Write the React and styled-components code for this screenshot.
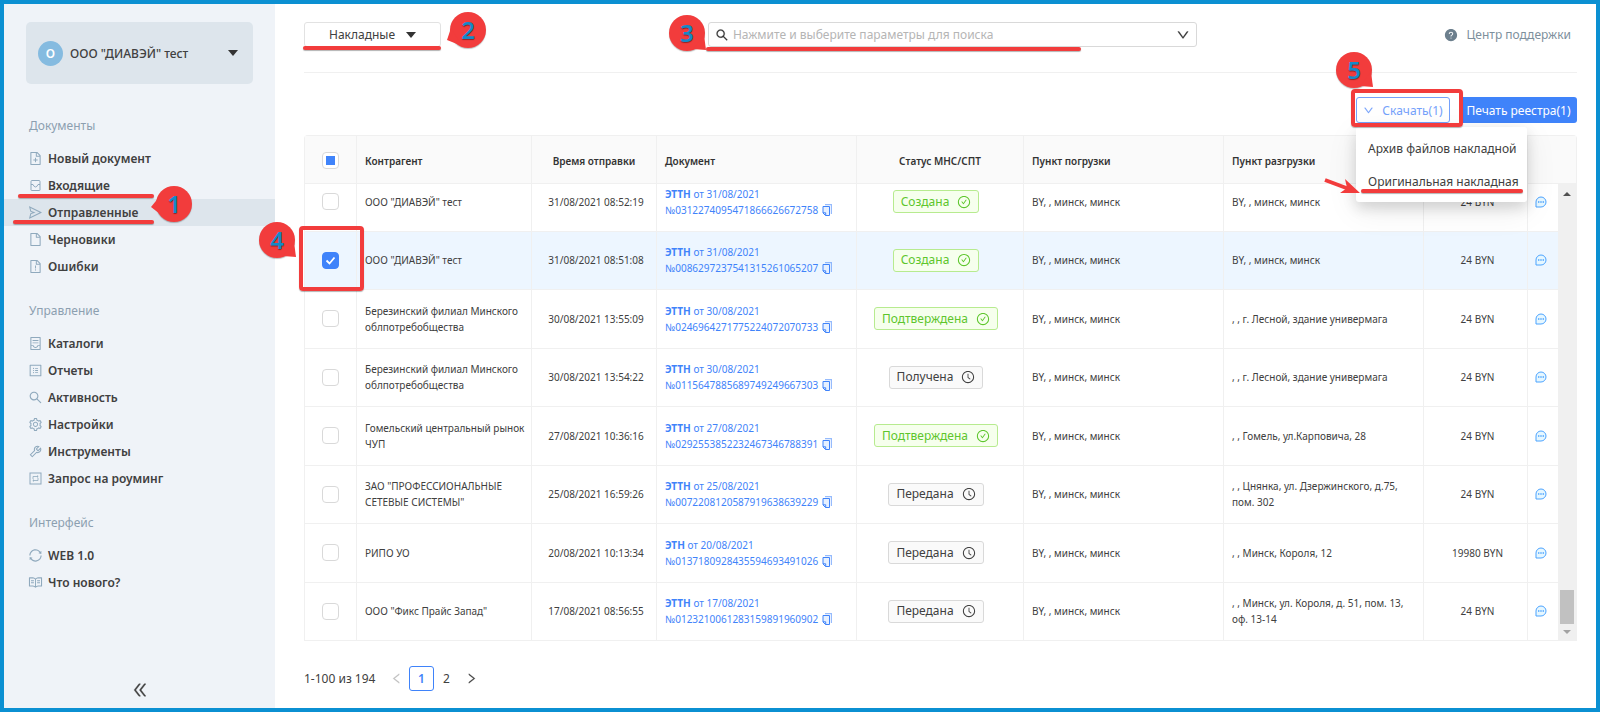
import React from 'react';
import styled, { createGlobalStyle, css } from 'styled-components';
import {
  AiOutlineFileAdd, AiOutlineSend, AiOutlineFile, AiOutlineFileExclamation, AiOutlineContainer,
  AiOutlineProfile, AiOutlineSearch, AiOutlineSetting, AiOutlineTool, AiOutlineSync, AiOutlineRead,
  AiOutlineCheckCircle, AiOutlineClockCircle, AiFillQuestionCircle,
  AiOutlineDoubleLeft, AiOutlineDown, AiOutlineLeft, AiOutlineRight,
} from 'react-icons/ai';

const GlobalStyle = createGlobalStyle`
  * { box-sizing: border-box; }
  body {
    margin: 0;
    font-family: "Noto Sans", "Open Sans", sans-serif;
    font-size: 12px;
    color: #404040;
    background: #fff;
  }
  button, input { font: inherit; color: inherit; }
  button { cursor: pointer; }
  a { color: inherit; text-decoration: none; }
`;

const RED = '#f23c3c';

const Page = styled.div`
  display: flex;
  min-height: 100vh;
  border: 4px solid #0b90d2;
`;

/* ---------- sidebar ---------- */

const Sidebar = styled.aside`
  display: flex;
  flex-direction: column;
  flex: 0 0 271px;
  background: #eff3f8;
`;

const Account = styled.button`
  display: flex;
  align-items: center;
  height: 62px;
  margin: 18px 22px 32px;
  padding: 0 15px 0 12px;
  border: 0;
  border-radius: 5px;
  background: #dde5ec;
  font-weight: 500;
`;

const Avatar = styled.span`
  display: grid;
  place-items: center;
  width: 25px;
  height: 25px;
  margin-right: 7px;
  border-radius: 50%;
  background: #85bbe0;
  color: #fff;
  font-weight: 600;
`;

const AccountName = styled.span`
  flex: 1;
  text-align: left;
`;

const Triangle = styled.span`
  border: 5px solid transparent;
  border-top: 6px solid #333;
  border-bottom: 0;
`;

const GroupTitle = styled.h2`
  margin: 0;
  padding: 0 25px;
  line-height: 20px;
  font-size: 12px;
  font-weight: 400;
  color: #8c9fb0;
`;

const Menu = styled.ul`
  list-style: none;
  margin: 9px 0 21px;
  padding: 0;
`;

const MenuItem = styled.li`
  position: relative;
`;

const MenuLink = styled.a`
  display: flex;
  align-items: center;
  gap: 5px;
  height: 27px;
  padding: 0 24px;
  font-weight: 600;
  background: ${({ $active }) => ($active ? '#dde5ec' : 'transparent')};

  svg {
    width: 15px;
    height: 15px;
    color: #8fa9bd;
  }
`;

const Collapse = styled.button`
  margin: auto auto 9px;
  padding: 0;
  border: 0;
  background: none;
  line-height: 0;

  svg {
    width: 18px;
    height: 18px;
    stroke: currentColor;
    stroke-width: 20;
  }
`;

/* ---------- main area ---------- */

const Main = styled.main`
  flex: 1;
  min-width: 0;
  padding: 18px 19px 14px 29px;
`;

const TopBar = styled.header`
  display: grid;
  grid-template-columns: 17fr 489px 16fr;
  align-items: start;
  height: 51px;
  border-bottom: 1px solid #f0f0f0;
`;

const TypeWrap = styled.div`
  position: relative;
  width: 137px;
`;

const TypeButton = styled.button`
  display: flex;
  align-items: center;
  justify-content: center;
  gap: 11px;
  width: 100%;
  height: 25px;
  border: 1px solid #e2e2e2;
  border-radius: 3px;
  background: #fff;
`;

const SearchBox = styled.label`
  position: relative;
  display: flex;
  align-items: center;
  gap: 4px;
  height: 25px;
  padding: 0 6px;
  border: 1px solid #d9d9d9;
  border-radius: 3px;

  svg {
    width: 14px;
    height: 14px;
    color: #333;
    stroke: currentColor;
    stroke-width: 20;
  }
`;

const SearchInput = styled.input`
  flex: 1;
  min-width: 0;
  padding: 0;
  border: 0;
  outline: 0;
  background: none;

  &::placeholder { color: #b5b5b5; }
`;

const Support = styled.a`
  display: flex;
  align-items: center;
  justify-self: end;
  gap: 8px;
  height: 25px;
  padding-right: 6px;
  color: #7d8f9c;

  svg {
    width: 14px;
    height: 14px;
    color: #6c7f8d;
  }
`;

const Actions = styled.div`
  display: flex;
  justify-content: flex-end;
  gap: 10px;
  padding: 24px 0 12px;
`;

const DownloadWrap = styled.div`
  position: relative;
`;

const actionButton = css`
  height: 26px;
  border-radius: 3px;
  white-space: nowrap;
`;

const DownloadButton = styled.button`
  ${actionButton}
  display: flex;
  align-items: center;
  justify-content: center;
  gap: 8px;
  width: 94px;
  padding: 0;
  border: 1px solid #74a1fb;
  background: #fff;
  color: #74a1fb;

  svg {
    width: 11px;
    height: 11px;
    stroke: currentColor;
    stroke-width: 20;
  }
`;

const PrintButton = styled.button`
  ${actionButton}
  width: 117px;
  padding: 0;
  border: 0;
  background: #3f83fa;
  color: #fff;
`;

const Dropdown = styled.ul`
  position: absolute;
  z-index: 3;
  top: 30px;
  left: 0;
  width: 171px;
  margin: 0;
  padding: 5px 0 4px;
  list-style: none;
  border-radius: 3px;
  background: #fff;
  box-shadow: 0 6px 14px rgba(0, 0, 0, 0.14), 0 8px 32px rgba(0, 0, 0, 0.08);
`;

const DropdownItem = styled.li`
  line-height: 33px;
  padding: 0 12px;
  white-space: nowrap;
`;

/* ---------- table ---------- */

const TableFrame = styled.div`
  position: relative;
  border: 1px solid #f0f0f0;
  border-bottom: 0;
  border-radius: 4px 4px 0 0;
`;

const Table = styled.table`
  width: 100%;
  border-collapse: separate;
  border-spacing: 0;
  table-layout: fixed;
  font-size: 10px;
  line-height: 16px;
`;

const HeadTable = styled(Table)`
  background: #fafafa;
`;

const BodyTable = styled(Table)`
  flex: 0 0 468px;
`;

const Th = styled.th`
  height: 48px;
  padding: 2px 8px 0;
  border-right: ${({ $last }) => ($last ? '0' : '1px solid #f0f0f0')};
  border-bottom: 1px solid #f0f0f0;
  text-align: ${({ $center }) => ($center ? 'center' : 'left')};
  font-weight: 600;
  color: #333;
`;

const Scroll = styled.div`
  display: flex;
  height: 457px;
`;

/* scrolled to the end, so the first row is cut by the header */
const Rows = styled.div`
  display: flex;
  flex-direction: column;
  justify-content: flex-end;
  flex: 1;
  min-width: 0;
  overflow: hidden;
`;

const Row = styled.tr`
  background: ${({ $selected }) => ($selected ? '#edf6ff' : '#fff')};
`;

const Td = styled.td`
  height: 58px;
  padding: 0 4px 0 8px;
  border-right: 1px solid #f0f0f0;
  border-bottom: 1px solid #f0f0f0;
  text-align: ${({ $center }) => ($center ? 'center' : 'left')};
`;

const CheckCell = styled(Td)`
  padding: 0 8px;
`;

const IconCell = styled(Td)`
  padding: 0 4px 0 0;
  border-right: 0;
  text-align: center;
  line-height: 0;
`;

const Checkbox = styled.input`
  appearance: none;
  display: block;
  width: 17px;
  height: 17px;
  margin: 0 auto;
  border: 1px solid #d9d9d9;
  border-radius: 4px;
  background: #fff center / 100% no-repeat;

  ${({ $partial }) => $partial && css`
    background-image: linear-gradient(#3f83fa, #3f83fa);
    background-size: 9px 9px;
  `}

  &:checked {
    border-color: #3f83fa;
    background-color: #3f83fa;
    background-image: url("data:image/svg+xml,%3Csvg xmlns='http://www.w3.org/2000/svg' viewBox='0 0 15 15'%3E%3Cpath d='M3.5 7.5l3 3 5-6' fill='none' stroke='white' stroke-width='1.8'/%3E%3C/svg%3E");
  }
`;

const DocLink = styled.a`
  color: #3f83fa;
`;

const DocNumber = styled.span`
  display: flex;
  align-items: center;
  gap: 4px;
`;

const Status = styled.span`
  display: inline-flex;
  align-items: center;
  gap: 8px;
  height: 23px;
  margin-right: 12px;
  padding: 0 7px;
  border: 1px solid ${({ $ok }) => ($ok ? '#b7eb8f' : '#d9d9d9')};
  border-radius: 3px;
  background: ${({ $ok }) => ($ok ? '#f6ffed' : '#fafafa')};
  color: ${({ $ok }) => ($ok ? '#5dc62c' : '#404040')};
  font-size: 12px;
  vertical-align: middle;

  svg {
    width: 14px;
    height: 14px;
  }
`;

const ScrollBar = styled.div`
  display: flex;
  flex-direction: column;
  align-items: center;
  justify-content: space-between;
  flex: 0 0 18px;
  padding: 8px 0 7px;
  background: #f0f0f0;
`;

const Arrow = styled.span`
  border: 4px solid transparent;
  ${({ $up }) => ($up
    ? 'border-bottom-color: #505050; border-top: 0;'
    : 'border-top-color: #a3a3a3; border-bottom: 0;')}
`;

const Thumb = styled.span`
  width: 14px;
  height: 34px;
  margin: auto 0 6px;
  background: #c1c1c1;
`;

const Pager = styled.nav`
  display: flex;
  align-items: center;
  height: 25px;
  margin-top: 25px;
`;

const PagerTotal = styled.span`
  width: 80px;
`;

const PageButton = styled.button`
  display: grid;
  place-items: center;
  width: 25px;
  height: 25px;
  padding: 0;
  border: 1px solid ${({ $current }) => ($current ? '#3f83fa' : 'transparent')};
  border-radius: 3px;
  background: none;
  color: ${({ $current }) => ($current ? '#3f83fa' : '#404040')};
  font-weight: ${({ $current }) => ($current ? 600 : 400)};

  &:disabled { color: #bfbfbf; }

  svg {
    width: 13px;
    height: 13px;
    stroke: currentColor;
    stroke-width: 20;
  }
`;

/* ---------- red tutorial marks, they lie over the interface ---------- */

const Underline = styled.span`
  position: absolute;
  z-index: 4;
  left: ${({ $left }) => $left}px;
  bottom: ${({ $bottom }) => $bottom}px;
  width: ${({ $width }) => $width}px;
  height: 4px;
  border-radius: 2px;
  background: ${RED};
  box-shadow: 0 1px 1px rgba(0, 0, 0, 0.3);
`;

const Frame = styled.span`
  position: absolute;
  z-index: 5;
  inset: ${({ $inset }) => $inset};
  min-width: 65px;
  min-height: 38px;
  border: 4px solid ${RED};
  border-radius: 4px;
  box-shadow: 0 1px 1px rgba(0, 0, 0, 0.3);
  pointer-events: none;
`;

const SquareFrame = styled(Frame)`
  width: 65px;
  height: 65px;
`;

const Bubble = styled.span`
  position: absolute;
  z-index: 6;
  left: ${({ $left }) => $left}px;
  top: ${({ $top }) => $top}px;
  display: grid;
  place-items: center;
  width: 36px;
  height: 36px;
  border-radius: 50%;
  background: ${RED};
  box-shadow: 0 1px 1px rgba(0, 0, 0, 0.25);
  color: #1489c8;
  font-size: 24px;
  font-weight: 600;
  line-height: 36px;
  text-shadow: 0 1px 1px rgba(0, 0, 0, 0.4);

  b {
    position: relative;
    font-weight: inherit;
  }
`;

const Tail = styled.svg`
  && {
    position: absolute;
    inset: 0;
    width: 36px;
    height: 36px;
    overflow: visible;
    stroke: none;
  }
`;

const RedArrow = styled.svg`
  position: absolute;
  z-index: 5;
  left: -33px;
  top: 49px;
`;

const tails = {
  left: '4,10 -5,21 4,28',
  leftLow: '1,16 -3,28 12,34',
  rightLow: '35,20 37,35 24,34',
};

const Callout = ({ number, left, top, tail }) => (
  <Bubble $left={left} $top={top}>
    <Tail><polygon points={tails[tail]} fill={RED} /></Tail>
    <b>{number}</b>
  </Bubble>
);

/* ---------- icons ---------- */

const InboxIcon = () => (
  <svg viewBox="0 0 15 15" fill="none" stroke="currentColor">
    <path d="M4 2.500h7q1 0 1 1V12q0 .5-.5.5h-8Q3 12.500 3 12V3.500q0-1 1-1zM3 6.500h2q1 2.500 2.500 2.500T10 6.500h2" />
  </svg>
);

const RoamingIcon = () => (
  <svg viewBox="0 0 15 15" fill="none" stroke="currentColor">
    <rect x="2" y="2" width="11" height="11" />
    <path d="M5 8V5.500h5M9 4.500l1.200 1L9 6.500M10 7v2.500H5M6 8.500L4.800 9.500 6 10.500" strokeWidth="0.800" />
  </svg>
);

const CopyIcon = () => (
  <svg width="10" height="12" viewBox="0 0 10 12" fill="none" stroke="currentColor">
    <path d="M3 .5h6.500V10" opacity="0.550" strokeWidth="1.400" />
    <path d="M1 2.500h6.500v9H3.500L1 9zM1 8.800h2.700v2.700" fill="#e6f0ff" />
  </svg>
);

const MessageIcon = () => (
  <svg width="12" height="12" viewBox="0 0 12 12" fill="none" stroke="#4ba3ff">
    <path d="M6 1a5 5 0 1 1 0 10H1V6a5 5 0 0 1 5-5z" fill="#e6f7ff" />
    <path d="M3 6h1.400M5.300 6h1.400M7.600 6H9" strokeWidth="1.300" />
  </svg>
);

const groups = [
  {
    title: 'Документы',
    items: [
      { name: 'Новый документ', icon: AiOutlineFileAdd },
      { name: 'Входящие', icon: InboxIcon },
      { name: 'Отправленные', icon: AiOutlineSend, active: true },
      { name: 'Черновики', icon: AiOutlineFile },
      { name: 'Ошибки', icon: AiOutlineFileExclamation },
    ],
  },
  {
    title: 'Управление',
    items: [
      { name: 'Каталоги', icon: AiOutlineContainer },
      { name: 'Отчеты', icon: AiOutlineProfile },
      { name: 'Активность', icon: AiOutlineSearch },
      { name: 'Настройки', icon: AiOutlineSetting },
      { name: 'Инструменты', icon: AiOutlineTool },
      { name: 'Запрос на роуминг', icon: RoamingIcon },
    ],
  },
  {
    title: 'Интерфейс',
    items: [
      { name: 'WEB 1.0', icon: AiOutlineSync },
      { name: 'Что нового?', icon: AiOutlineRead },
    ],
  },
];

const rows = [
  { partner: 'ООО "ДИАВЭЙ" тест', time: '31/08/2021 08:52:19', type: 'ЭТТН', date: '31/08/2021', number: '0312274095471866626672758', status: 'Создана', ok: true, to: 'BY, , минск, минск', sum: '24 BYN' },
  { partner: 'ООО "ДИАВЭЙ" тест', time: '31/08/2021 08:51:08', type: 'ЭТТН', date: '31/08/2021', number: '0086297237541315261065207', status: 'Создана', ok: true, to: 'BY, , минск, минск', sum: '24 BYN', selected: true },
  { partner: 'Березинский филиал Минского облпотребобщества', time: '30/08/2021 13:55:09', type: 'ЭТТН', date: '30/08/2021', number: '0246964271775224072070733', status: 'Подтверждена', ok: true, to: ', , г. Лесной, здание универмага', sum: '24 BYN' },
  { partner: 'Березинский филиал Минского облпотребобщества', time: '30/08/2021 13:54:22', type: 'ЭТТН', date: '30/08/2021', number: '0115647885689749249667303', status: 'Получена', to: ', , г. Лесной, здание универмага', sum: '24 BYN' },
  { partner: 'Гомельский центральный рынок ЧУП', time: '27/08/2021 10:36:16', type: 'ЭТТН', date: '27/08/2021', number: '0292553852232467346788391', status: 'Подтверждена', ok: true, to: ', , Гомель, ул.Карповича, 28', sum: '24 BYN' },
  { partner: 'ЗАО "ПРОФЕССИОНАЛЬНЫЕ СЕТЕВЫЕ СИСТЕМЫ"', time: '25/08/2021 16:59:26', type: 'ЭТТН', date: '25/08/2021', number: '0072208120587919638639229', status: 'Передана', to: ', , Цнянка, ул. Дзержинского, д.75, пом. 302', sum: '24 BYN' },
  { partner: 'РИПО УО', time: '20/08/2021 10:13:34', type: 'ЭТН', date: '20/08/2021', number: '0137180928435594693491026', status: 'Передана', to: ', , Минск, Короля, 12', sum: '19980 BYN' },
  { partner: 'ООО "Фикс Прайс Запад"', time: '17/08/2021 08:56:55', type: 'ЭТТН', date: '17/08/2021', number: '0123210061283159891960902', status: 'Передана', to: ', , Минск, ул. Короля, д. 51, пом. 13, оф. 13-14', sum: '24 BYN' },
];

const Col = styled.col`
  width: ${({ $width }) => ($width ? `${$width}px` : 'auto')};
`;

const Columns = ({ last }) => (
  <colgroup>
    <Col $width={52} />
    <Col />
    <Col $width={125} />
    <Col $width={200} />
    <Col $width={167} />
    <Col $width={200} />
    <Col $width={200} />
    <Col $width={104} />
    <Col $width={last} />
  </colgroup>
);

const App = () => (
  <>
    <GlobalStyle />
    <Page>
      <Sidebar>
        <Account>
          <Avatar>О</Avatar>
          <AccountName>ООО "ДИАВЭЙ" тест</AccountName>
          <Triangle />
        </Account>
        {groups.map((group) => (
          <React.Fragment key={group.title}>
            <GroupTitle>{group.title}</GroupTitle>
            <Menu>
              {group.items.map(({ name, icon: Icon, active }) => (
                <MenuItem key={name}>
                  <MenuLink href="#" $active={active}><Icon />{name}</MenuLink>
                  {active && (
                    <>
                      <Underline $left={14} $bottom={28} $width={136} />
                      <Underline $left={9} $bottom={2} $width={141} />
                      <Callout number="1" left={152} top={-13} tail="left" />
                    </>
                  )}
                </MenuItem>
              ))}
            </Menu>
          </React.Fragment>
        ))}
        <Collapse aria-label="Свернуть меню"><AiOutlineDoubleLeft /></Collapse>
      </Sidebar>

      <Main>
        <TopBar>
          <TypeWrap>
            <TypeButton>Накладные <Triangle /></TypeButton>
            <Underline $left={-1} $bottom={-3} $width={138} />
            <Callout number="2" left={146} top={-10} tail="leftLow" />
          </TypeWrap>
          <SearchBox>
            <AiOutlineSearch />
            <SearchInput type="text" placeholder="Нажмите и выберите параметры для поиска" aria-label="Поиск" />
            <AiOutlineDown />
            <Underline $left={-3} $bottom={-5} $width={375} />
            <Callout number="3" left={-40} top={-8} tail="rightLow" />
          </SearchBox>
          <Support href="#"><AiFillQuestionCircle />Центр поддержки</Support>
        </TopBar>

        <Actions>
          <DownloadWrap>
            <DownloadButton><AiOutlineDown />Скачать(1)</DownloadButton>
            <Frame $inset="-8px -13px -4px -5px" />
            <Callout number="5" left={-20} top={-45} tail="rightLow" />
            <Dropdown>
              <DropdownItem>Архив файлов накладной</DropdownItem>
              <DropdownItem>Оригинальная накладная</DropdownItem>
              <Underline $left={5} $bottom={9} $width={162} />
              <RedArrow width="38" height="20" viewBox="0 0 38 20">
                <path d="M2 4l24 9" stroke={RED} strokeWidth="4" />
                <polygon points="22,3 37,17 17,17 24,12" fill={RED} />
              </RedArrow>
            </Dropdown>
          </DownloadWrap>
          <PrintButton>Печать реестра(1)</PrintButton>
        </Actions>

        <TableFrame>
          <HeadTable>
            <Columns last={48} />
            <thead>
              <tr>
                <Th><Checkbox type="checkbox" $partial aria-label="Выбрать все" /></Th>
                <Th>Контрагент</Th>
                <Th $center>Время отправки</Th>
                <Th>Документ</Th>
                <Th $center>Статус МНС/СПТ</Th>
                <Th>Пункт погрузки</Th>
                <Th>Пункт разгрузки</Th>
                <Th />
                <Th $last />
              </tr>
            </thead>
          </HeadTable>
          <Scroll>
            <Rows>
              <BodyTable>
                <Columns last={30} />
                <tbody>
                  {rows.map((row) => (
                    <Row key={row.number} $selected={row.selected}>
                      <CheckCell>
                        <Checkbox type="checkbox" defaultChecked={row.selected} aria-label={row.partner} />
                      </CheckCell>
                      <Td>{row.partner}</Td>
                      <Td $center>{row.time}</Td>
                      <Td>
                        <DocLink href="#">
                          <b>{row.type}</b> от {row.date}
                          <DocNumber>№{row.number} <CopyIcon /></DocNumber>
                        </DocLink>
                      </Td>
                      <Td $center>
                        <Status $ok={row.ok}>
                          {row.status}
                          {row.ok ? <AiOutlineCheckCircle /> : <AiOutlineClockCircle />}
                        </Status>
                      </Td>
                      <Td>BY, , минск, минск</Td>
                      <Td>{row.to}</Td>
                      <Td $center>{row.sum}</Td>
                      <IconCell><MessageIcon /></IconCell>
                    </Row>
                  ))}
                </tbody>
              </BodyTable>
            </Rows>
            <ScrollBar>
              <Arrow $up />
              <Thumb />
              <Arrow />
            </ScrollBar>
          </Scroll>
          <SquareFrame $inset="auto auto 350px -6px" />
          <Callout number="4" left={-46} top={86} tail="rightLow" />
        </TableFrame>

        <Pager>
          <PagerTotal>1-100 из 194</PagerTotal>
          <PageButton disabled aria-label="Назад"><AiOutlineLeft /></PageButton>
          <PageButton $current>1</PageButton>
          <PageButton>2</PageButton>
          <PageButton aria-label="Вперед"><AiOutlineRight /></PageButton>
        </Pager>
      </Main>
    </Page>
  </>
);

export default App;
